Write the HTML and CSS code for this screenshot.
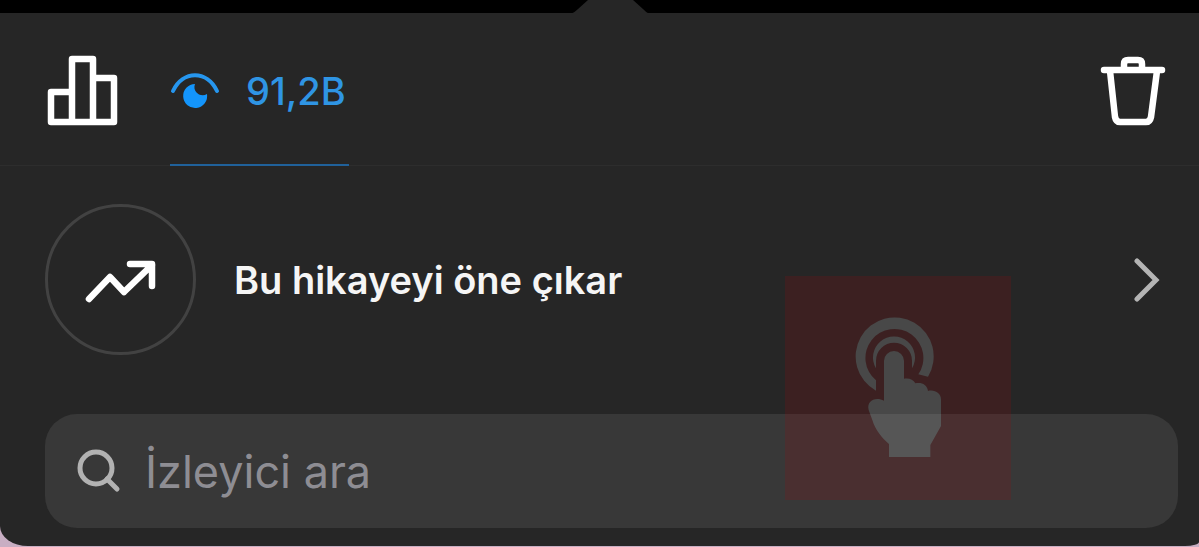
FILE: index.html
```html
<!DOCTYPE html>
<html lang="tr">
<head>
    <meta charset="UTF-8">
    <meta name="viewport" content="width=device-width, initial-scale=1.0">
    <title>Hikaye</title>
    <link rel="stylesheet" href="styles.css">
</head>
<body>

    <!-- Notch pointing at the selected story -->
    <div class="top-strip">
        <svg class="notch" viewBox="0 0 90 14" aria-hidden="true">
            <path d="M2 14C8 14 11 12 14 9L24 0H69L79 9C82 12 84 14 90 14Z"/>
        </svg>
    </div>

    <main class="sheet">
        <div class="toolbar">
            <button class="icon-button" type="button" aria-label="İstatistikler">
                <svg width="72" height="72" viewBox="0 0 72 72">
                    <path class="line" d="M4 67V37H25V4H46V23H67V67ZM25 37V67M46 23V67"/>
                </svg>
            </button>

            <button class="views-tab" type="button" aria-label="Görüntüleyenler: 91,2B">
                <svg width="50" height="38" viewBox="0 0 50 38">
                    <path class="lid" d="M3 19C13 -2 37 -2 47 19"/>
                    <path class="pupil" d="M25 12A12 12 0 1 0 37 22C31 26 22 20 25 12Z"/>
                </svg>
                <span>91,2B</span>
            </button>

            <button class="icon-button trash" type="button" aria-label="Sil">
                <svg width="66" height="72" viewBox="0 0 66 72">
                    <path class="line" d="M4 15H62M24 14V9Q24 5 28 5H38Q42 5 42 9V14M10 16L15 62Q16 67 20 67H46Q50 67 51 62L57 16"/>
                </svg>
            </button>
        </div>

        <a class="promote" href="#">
            <span class="promote-icon">
                <svg width="72" height="46" viewBox="0 0 72 46">
                    <path class="line" d="M4 42L25 20L39 35L67 8M45 7H67V29"/>
                </svg>
            </span>
            <span class="promote-text">Bu hikayeyi öne çıkar</span>
            <svg class="chevron" width="26" height="46" viewBox="0 0 26 46">
                <path d="M3 4L22 23L3 42"/>
            </svg>
        </a>

        <label class="search">
            <svg width="44" height="44" viewBox="0 0 44 44" aria-hidden="true">
                <circle cx="19" cy="19" r="16"/>
                <path d="M30 30L40 40"/>
            </svg>
            <input type="text" placeholder="İzleyici ara" aria-label="İzleyici ara">
        </label>

        <!-- Tap hint -->
        <div class="tap-hint">
            <svg width="96" height="144" viewBox="240 168 288 432" aria-hidden="true">
                <path d="M318 392A117 117 0 1 1 474 350L445 343A87 87 0 1 0 318 361Z"/>
                <path d="M318 325A63 63 0 1 1 426 325V302A54 54 0 0 0 318 302Z"/>
                <path d="M342 422V303A30 30 0 0 1 402 303V356C416 353 430 358 436 370C453 366 471 372 474 393C494 388 513 400 513 419V498L481 555V591H357V552C335 533 316 510 307 480L296 450C289 424 315 409 342 422Z"/>
            </svg>
        </div>
    </main>

</body>
</html>
```
FILE: styles.css
```css
* {
    box-sizing: border-box;
}

body {
    margin: 0;
    background-color: #c8aec3;
    color: #f5f5f5;
    font-family: Inter, "Liberation Sans", sans-serif;
}

button {
    padding: 0;
    border: none;
    background: none;
    color: inherit;
    font: inherit;
    cursor: pointer;
}

svg {
    display: block;
    flex: none;
}

.top-strip {
    display: flex;
    justify-content: center;
    height: 13px;
    padding-left: 18px;
    background-color: #000;
}

.notch {
    width: 90px;
    height: 14px;
    fill: #262626;
}

.sheet {
    position: relative;
    padding-bottom: 18px;
    background-color: #262626;
    border-radius: 0 0 14px 28px / 0 0 4px 20px;
}

.line {
    fill: none;
    stroke: #fff;
    stroke-width: 6.5;
    stroke-linecap: round;
    stroke-linejoin: round;
}

/* Toolbar */
.toolbar {
    display: flex;
    align-items: stretch;
    height: 153px;
    padding: 0 33px 0 47px;
    border-bottom: 1px solid #2d2d2d;
}

.icon-button {
    display: flex;
    align-items: center;
    padding-top: 4px;
}

.trash {
    margin-left: auto;
}

.views-tab {
    display: flex;
    align-items: center;
    gap: 26px;
    margin: 0 0 -1px 51px;
    padding: 4px 3px 0 0;
    border-bottom: 2px solid #20619a;
    color: #2f95e4;
    font-size: 38px;
    font-weight: 500;
}

.lid {
    fill: none;
    stroke: #2696ee;
    stroke-width: 4;
    stroke-linecap: round;
}

.pupil {
    fill: #1495fb;
}

/* Promote row */
.promote {
    display: flex;
    align-items: center;
    padding: 38px 39px 59px 45px;
    color: inherit;
    text-decoration: none;
}

.promote-icon {
    display: flex;
    align-items: center;
    justify-content: center;
    width: 151px;
    height: 151px;
    border: 3px solid #424242;
    border-radius: 50%;
}

.promote-text {
    margin-left: 38px;
    font-size: 38px;
    font-weight: 600;
}

.chevron {
    margin-left: auto;
    fill: none;
    stroke: #b4b4b4;
    stroke-width: 5;
    stroke-linecap: round;
}

/* Search */
.search {
    display: flex;
    align-items: center;
    gap: 24px;
    height: 114px;
    margin: 0 21px 0 45px;
    padding: 0 32px;
    background-color: #383838;
    border-radius: 32px;
}

.search svg {
    fill: none;
    stroke: #b2b2b2;
    stroke-width: 5;
    stroke-linecap: round;
}

.search input {
    flex: 1;
    min-width: 0;
    padding: 0;
    border: none;
    outline: none;
    background: none;
    color: #fff;
    font-family: inherit;
    font-size: 45px;
}

.search input::placeholder {
    color: #8e8d93;
    opacity: 1;
}

/* Tap hint */
.tap-hint {
    position: absolute;
    right: 188px;
    bottom: 46px;
    display: flex;
    align-items: center;
    justify-content: center;
    width: 226px;
    height: 224px;
    background-color: #940d12;
    opacity: 0.2;
    pointer-events: none;
}

.tap-hint svg {
    fill: #d0d0d0;
}
```
